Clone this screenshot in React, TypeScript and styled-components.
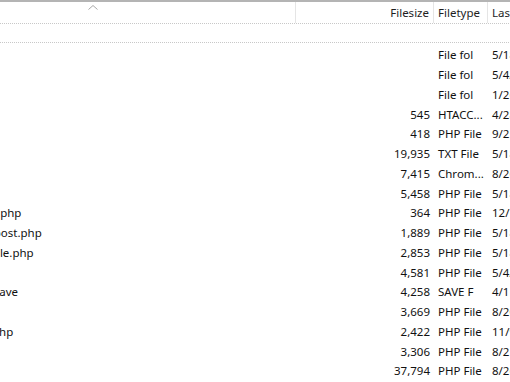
import React from "react";
import styled, { createGlobalStyle } from "styled-components";

const Global = createGlobalStyle`
  html, body { margin: 0; padding: 0; background: #fff; }
  body { font-family: "Noto Sans", "Open Sans", sans-serif; font-size: 11.5px; color: #111; }
`;

const Viewport = styled.div`
  width: 510px;
  height: 382px;
  overflow: hidden;
  position: relative;
  background: #fff;
`;

const Table = styled.div`
  display: grid;
  grid-template-columns: 296px 138px 54px 120px;
  width: 608px;
`;

const TopBar = styled.div`
  grid-column: 1 / -1;
  height: 2px;
  background: #b4b4b4;
`;

const HeaderCell = styled.div<{ $align?: string; $sep?: boolean }>`
  height: 21px;
  display: flex;
  align-items: center;
  justify-content: ${(p) => p.$align || "flex-start"};
  padding: 0 4px;
  box-sizing: border-box;
  border-right: ${(p) => (p.$sep ? "1px solid #e5e5e5" : "none")};
  position: relative;
  white-space: nowrap;
  color: #1e1e1e;
`;

const SortArrow = styled.svg`
  position: absolute;
  top: 2px;
  left: 87px;
`;

const Dotted = styled.div`
  grid-column: 1 / -1;
  height: 1px;
  background-image: linear-gradient(to right, #c8c8c8 50%, transparent 50%);
  background-size: 2px 1px;
`;

const Spacer = styled.div`
  grid-column: 1 / -1;
  height: 18px;
`;

const Cell = styled.div<{ $align?: string }>`
  height: 19.75px;
  display: flex;
  align-items: center;
  justify-content: ${(p) => p.$align || "flex-start"};
  padding: 0 4px;
  box-sizing: border-box;
  white-space: nowrap;
  overflow: hidden;
`;

const NameCell = styled(Cell)`
  overflow: visible;
  padding-left: 0;
`;

const NameText = styled.span`
  margin-left: -87px;
`;

const Body = styled.div`
  grid-column: 1 / -1;
  display: grid;
  grid-template-columns: 296px 138px 54px 120px;
  padding-top: 2px;
`;

const rows: [string, string, string, string][] = [
  ["wp-admin", "", "File fol", "5/18/2022"],
  ["wp-content", "", "File fol", "5/4/2022"],
  ["wp-includes", "", "File fol", "1/26/2022"],
  [".htaccess", "545", "HTACC...", "4/28/2022"],
  ["index.php", "418", "PHP File", "9/25/2013"],
  ["license.txt", "19,935", "TXT File", "5/18/2022"],
  ["readme.html", "7,415", "Chrom...", "8/26/2022"],
  ["wp-activate.php", "5,458", "PHP File", "5/18/2022"],
  ["wp-blog-header.php", "364", "PHP File", "12/19/2019"],
  ["wp-comments-post.php", "1,889", "PHP File", "5/18/2022"],
  ["wp-config-sample.php", "2,853", "PHP File", "5/18/2022"],
  ["wp-config.php", "4,581", "PHP File", "5/4/2022"],
  ["wp-config.php.save", "4,258", "SAVE F", "4/11/2022"],
  ["wp-cron.php", "3,669", "PHP File", "8/20/2022"],
  ["wp-links-opml.php", "2,422", "PHP File", "11/9/2021"],
  ["wp-load.php", "3,306", "PHP File", "8/21/2022"],
  ["wp-login.php", "37,794", "PHP File", "8/26/2022"],
];

export default function App() {
  return (
    <>
      <Global />
      <Viewport>
        <Table>
          <TopBar />
          <HeaderCell $sep>
            <SortArrow width="12" height="6" viewBox="0 0 12 6">
              <path d="M1.5 5.5 L6 1.5 L10.5 5.5" fill="none" stroke="#a8a8a8" strokeWidth="1" />
            </SortArrow>
          </HeaderCell>
          <HeaderCell $align="flex-end" $sep>Filesize</HeaderCell>
          <HeaderCell $sep>Filetype</HeaderCell>
          <HeaderCell>Last modified</HeaderCell>
          <Dotted />
          <Spacer />
          <Dotted />
          <Body>
            {rows.map((r) => (
              <React.Fragment key={r[0]}>
                <NameCell>
                  <NameText>{r[0]}</NameText>
                </NameCell>
                <Cell $align="flex-end">{r[1]}</Cell>
                <Cell>{r[2]}</Cell>
                <Cell>{r[3]}</Cell>
              </React.Fragment>
            ))}
          </Body>
        </Table>
      </Viewport>
    </>
  );
}
